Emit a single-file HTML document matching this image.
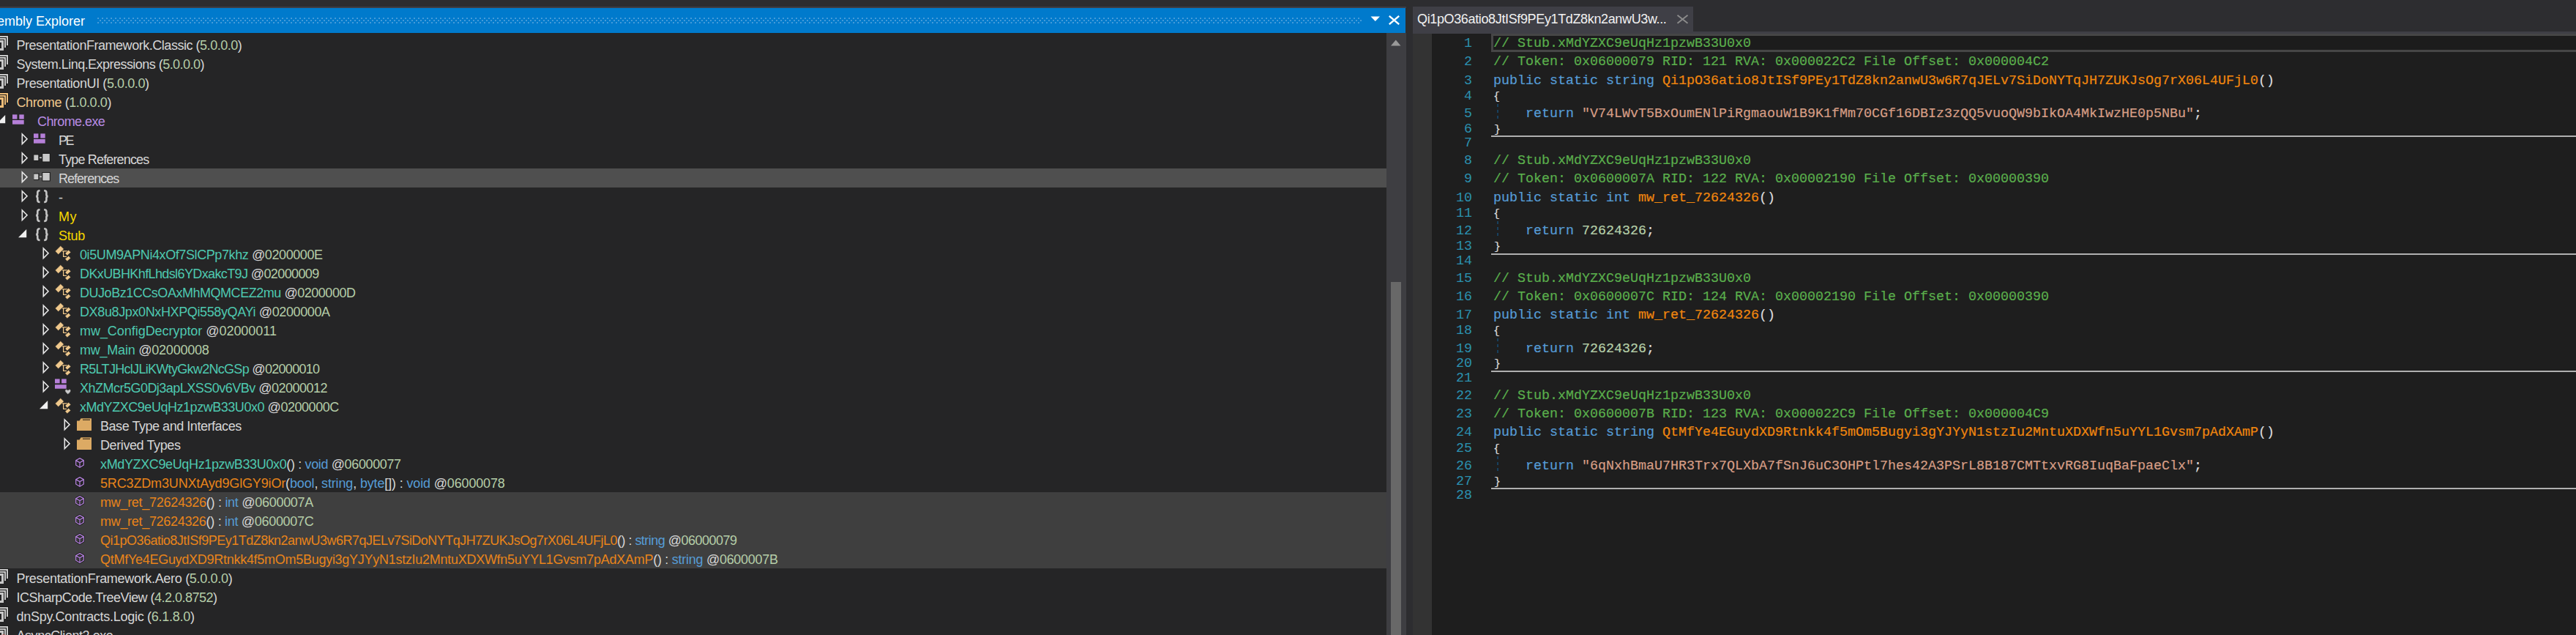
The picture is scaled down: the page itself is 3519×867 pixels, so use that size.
<!DOCTYPE html>
<html><head><meta charset="utf-8"><style>
html,body{margin:0;padding:0}
body{width:3519px;height:867px;overflow:hidden;position:relative;background:#2d2d30;font-family:"Liberation Sans",sans-serif}
.abs{position:absolute}
.tr{position:absolute;height:26px;line-height:26px;font-size:18px;white-space:pre;color:#d6d6d6}
.cl{position:absolute;left:2040px;font-family:"Liberation Mono",monospace;font-size:18.33px;white-space:pre;line-height:0;color:#dcdcdc;-webkit-text-stroke:0.2px currentColor}
.ln{position:absolute;left:1967px;width:44px;text-align:right;font-family:"Liberation Mono",monospace;font-size:18.33px;line-height:0;color:#2b91af}
</style></head><body>
<div class="abs" style="left:0;top:9px;width:1921px;height:2px;background:#3f3f46"></div>
<div class="abs" style="left:0;top:11px;width:1920px;height:34px;background:#007acc"></div>
<div class="abs" style="left:-34px;top:12px;height:34px;line-height:34px;font-size:18px;color:#ffffff;white-space:pre;letter-spacing:0px">Assembly Explorer</div>
<svg style="position:absolute;left:133px;top:24px" width="1727" height="9"><defs><pattern id="g" width="6" height="6" patternUnits="userSpaceOnUse"><rect x="0.25" y="0.25" width="1.6" height="1.6" fill="#6aaee0"/><rect x="3.25" y="3.25" width="1.6" height="1.6" fill="#6aaee0"/></pattern></defs><rect width="1727" height="9" fill="url(#g)"/></svg>
<svg class="abs" style="left:1872px;top:22px" width="14" height="8"><path d="M0.5 0.5 H13 L6.8 7 Z" fill="#ffffff"/></svg>
<svg class="abs" style="left:1896px;top:21px" width="18" height="13"><path d="M1.8 0.8 L15.2 12.2 M15.2 0.8 L1.8 12.2" stroke="#ffffff" stroke-width="2.3"/></svg>
<div class="abs" style="left:0;top:45px;width:1894px;height:822px;background:#252526"></div>
<div class="abs" style="left:0;top:230px;width:1894px;height:26px;background:#4f4f4f"></div>
<div class="abs" style="left:0;top:672px;width:1894px;height:104px;background:#3f3f3f"></div>
<svg style="position:absolute;left:0;top:48px" width="14" height="26" viewBox="0 48 14 26">
<path d="M0 50 H10 V62" stroke="#1a1a1a" stroke-width="4" fill="none"/>
<path d="M0 50 H10 V62" stroke="#c8c8c8" stroke-width="2" fill="none"/>
<path d="M0 53 H7 V65" stroke="#1a1a1a" stroke-width="4" fill="none"/>
<path d="M0 53 H7 V65" stroke="#c8c8c8" stroke-width="2" fill="none"/>
<rect x="-8" y="55" width="13" height="14" fill="#1a1a1a"/>
<rect x="-8" y="56.5" width="11.5" height="11" fill="#252526" stroke="#c8c8c8" stroke-width="3"/>
</svg><svg style="position:absolute;left:0;top:74px" width="14" height="26" viewBox="0 74 14 26">
<path d="M0 76 H10 V88" stroke="#1a1a1a" stroke-width="4" fill="none"/>
<path d="M0 76 H10 V88" stroke="#c8c8c8" stroke-width="2" fill="none"/>
<path d="M0 79 H7 V91" stroke="#1a1a1a" stroke-width="4" fill="none"/>
<path d="M0 79 H7 V91" stroke="#c8c8c8" stroke-width="2" fill="none"/>
<rect x="-8" y="81" width="13" height="14" fill="#1a1a1a"/>
<rect x="-8" y="82.5" width="11.5" height="11" fill="#252526" stroke="#c8c8c8" stroke-width="3"/>
</svg><svg style="position:absolute;left:0;top:100px" width="14" height="26" viewBox="0 100 14 26">
<path d="M0 102 H10 V114" stroke="#1a1a1a" stroke-width="4" fill="none"/>
<path d="M0 102 H10 V114" stroke="#c8c8c8" stroke-width="2" fill="none"/>
<path d="M0 105 H7 V117" stroke="#1a1a1a" stroke-width="4" fill="none"/>
<path d="M0 105 H7 V117" stroke="#c8c8c8" stroke-width="2" fill="none"/>
<rect x="-8" y="107" width="13" height="14" fill="#1a1a1a"/>
<rect x="-8" y="108.5" width="11.5" height="11" fill="#252526" stroke="#c8c8c8" stroke-width="3"/>
</svg><svg style="position:absolute;left:0;top:126px" width="14" height="26" viewBox="0 126 14 26">
<path d="M0 128 H10 V140" stroke="#1a1a1a" stroke-width="4" fill="none"/>
<path d="M0 128 H10 V140" stroke="#eebd78" stroke-width="2" fill="none"/>
<path d="M0 131 H7 V143" stroke="#1a1a1a" stroke-width="4" fill="none"/>
<path d="M0 131 H7 V143" stroke="#eebd78" stroke-width="2" fill="none"/>
<rect x="-8" y="133" width="13" height="14" fill="#1a1a1a"/>
<rect x="-8" y="134.5" width="11.5" height="11" fill="#252526" stroke="#eebd78" stroke-width="3"/>
</svg><svg style="position:absolute;left:-4px;top:152px" width="12" height="26"><path d="M0 16.2 L11.2 16.2 L11.2 5 Z" fill="#f0f0f0"/></svg><svg style="position:absolute;left:17.3px;top:152px" width="24" height="26"><rect x="0" y="4.4" width="6.4" height="6.2" fill="#b57fd8"/><rect x="9.3" y="4.4" width="6.4" height="6.2" fill="#b57fd8"/><rect x="0" y="12" width="15.7" height="5.7" fill="#b57fd8"/></svg><svg style="position:absolute;left:29px;top:178px" width="12" height="26"><path d="M1.3 5 L8 11.75 L1.3 18.5 Z" stroke="#e8e8e8" stroke-width="1.6" fill="none" stroke-linejoin="miter"/></svg><svg style="position:absolute;left:46.3px;top:178px" width="24" height="26"><rect x="0" y="4.4" width="6.4" height="6.2" fill="#b57fd8"/><rect x="9.3" y="4.4" width="6.4" height="6.2" fill="#b57fd8"/><rect x="0" y="12" width="15.7" height="5.7" fill="#b57fd8"/></svg><svg style="position:absolute;left:29px;top:204px" width="12" height="26"><path d="M1.3 5 L8 11.75 L1.3 18.5 Z" stroke="#e8e8e8" stroke-width="1.6" fill="none" stroke-linejoin="miter"/></svg><svg style="position:absolute;left:46px;top:204px" width="24" height="26">
<rect x="-0.5" y="6.5" width="8" height="9.5" fill="#1a1a1a"/><rect x="0.3" y="7.5" width="6" height="7.5" fill="#c8c8c8"/>
<rect x="8" y="10.5" width="3" height="1.6" fill="#c8c8c8"/>
<rect x="11.3" y="5" width="11.5" height="12.5" fill="#1a1a1a"/><rect x="12.3" y="6" width="9.5" height="10.5" fill="#c8c8c8"/>
</svg><svg style="position:absolute;left:29px;top:230px" width="12" height="26"><path d="M1.3 5 L8 11.75 L1.3 18.5 Z" stroke="#e8e8e8" stroke-width="1.6" fill="none" stroke-linejoin="miter"/></svg><svg style="position:absolute;left:46px;top:230px" width="24" height="26">
<rect x="-0.5" y="6.5" width="8" height="9.5" fill="#1a1a1a"/><rect x="0.3" y="7.5" width="6" height="7.5" fill="#c8c8c8"/>
<rect x="8" y="10.5" width="3" height="1.6" fill="#c8c8c8"/>
<rect x="11.3" y="5" width="11.5" height="12.5" fill="#1a1a1a"/><rect x="12.3" y="6" width="9.5" height="10.5" fill="#c8c8c8"/>
</svg><svg style="position:absolute;left:29px;top:256px" width="12" height="26"><path d="M1.3 5 L8 11.75 L1.3 18.5 Z" stroke="#e8e8e8" stroke-width="1.6" fill="none" stroke-linejoin="miter"/></svg><svg style="position:absolute;left:46.5px;top:256px" width="24" height="26">
<path d="M7.5 4.3 C5 4.3 4.3 5.3 4.3 7 V9.8 C4.3 11.2 3.6 11.9 2.3 12.1 C3.6 12.3 4.3 13 4.3 14.4 V17.3 C4.3 19 5 20 7.5 20" stroke="#c4c4c4" stroke-width="2.6" fill="none"/>
<path d="M13.2 4.3 C15.7 4.3 16.4 5.3 16.4 7 V9.8 C16.4 11.2 17.1 11.9 18.4 12.1 C17.1 12.3 16.4 13 16.4 14.4 V17.3 C16.4 19 15.7 20 13.2 20" stroke="#c4c4c4" stroke-width="2.6" fill="none"/>
</svg><svg style="position:absolute;left:29px;top:282px" width="12" height="26"><path d="M1.3 5 L8 11.75 L1.3 18.5 Z" stroke="#e8e8e8" stroke-width="1.6" fill="none" stroke-linejoin="miter"/></svg><svg style="position:absolute;left:46.5px;top:282px" width="24" height="26">
<path d="M7.5 4.3 C5 4.3 4.3 5.3 4.3 7 V9.8 C4.3 11.2 3.6 11.9 2.3 12.1 C3.6 12.3 4.3 13 4.3 14.4 V17.3 C4.3 19 5 20 7.5 20" stroke="#c4c4c4" stroke-width="2.6" fill="none"/>
<path d="M13.2 4.3 C15.7 4.3 16.4 5.3 16.4 7 V9.8 C16.4 11.2 17.1 11.9 18.4 12.1 C17.1 12.3 16.4 13 16.4 14.4 V17.3 C16.4 19 15.7 20 13.2 20" stroke="#c4c4c4" stroke-width="2.6" fill="none"/>
</svg><svg style="position:absolute;left:25px;top:308px" width="12" height="26"><path d="M0 16.2 L11.2 16.2 L11.2 5 Z" fill="#f0f0f0"/></svg><svg style="position:absolute;left:46.5px;top:308px" width="24" height="26">
<path d="M7.5 4.3 C5 4.3 4.3 5.3 4.3 7 V9.8 C4.3 11.2 3.6 11.9 2.3 12.1 C3.6 12.3 4.3 13 4.3 14.4 V17.3 C4.3 19 5 20 7.5 20" stroke="#c4c4c4" stroke-width="2.6" fill="none"/>
<path d="M13.2 4.3 C15.7 4.3 16.4 5.3 16.4 7 V9.8 C16.4 11.2 17.1 11.9 18.4 12.1 C17.1 12.3 16.4 13 16.4 14.4 V17.3 C16.4 19 15.7 20 13.2 20" stroke="#c4c4c4" stroke-width="2.6" fill="none"/>
</svg><svg style="position:absolute;left:58px;top:334px" width="12" height="26"><path d="M1.3 5 L8 11.75 L1.3 18.5 Z" stroke="#e8e8e8" stroke-width="1.6" fill="none" stroke-linejoin="miter"/></svg><svg style="position:absolute;left:70px;top:333px" width="30" height="28">
<path d="M14.8 9.9 H22 M16.6 9.9 V17.4 H21" stroke="#1e1e1e" stroke-width="3" fill="none"/>
<path d="M14.8 9.9 H22 M16.6 9.9 V17.4 H21" stroke="#efc88c" stroke-width="1.3" fill="none"/>
<path d="M12.8 2.6 L17.4 7.1 L9.7 14.6 L5.3 10 Z" fill="#efc88c" stroke="#1e1e1e" stroke-width="0.6" stroke-linejoin="round"/>
<path d="M23.6 8.2 L26.9 11.5 L21.8 15.9 L18.8 13 Z" fill="#efc88c" stroke="#1e1e1e" stroke-width="0.6" stroke-linejoin="round"/>
<path d="M23.6 16.3 L26.7 19.4 L21.8 23.7 L18.8 20.6 Z" fill="#efc88c" stroke="#1e1e1e" stroke-width="0.6" stroke-linejoin="round"/>
</svg><svg style="position:absolute;left:58px;top:360px" width="12" height="26"><path d="M1.3 5 L8 11.75 L1.3 18.5 Z" stroke="#e8e8e8" stroke-width="1.6" fill="none" stroke-linejoin="miter"/></svg><svg style="position:absolute;left:70px;top:359px" width="30" height="28">
<path d="M14.8 9.9 H22 M16.6 9.9 V17.4 H21" stroke="#1e1e1e" stroke-width="3" fill="none"/>
<path d="M14.8 9.9 H22 M16.6 9.9 V17.4 H21" stroke="#efc88c" stroke-width="1.3" fill="none"/>
<path d="M12.8 2.6 L17.4 7.1 L9.7 14.6 L5.3 10 Z" fill="#efc88c" stroke="#1e1e1e" stroke-width="0.6" stroke-linejoin="round"/>
<path d="M23.6 8.2 L26.9 11.5 L21.8 15.9 L18.8 13 Z" fill="#efc88c" stroke="#1e1e1e" stroke-width="0.6" stroke-linejoin="round"/>
<path d="M23.6 16.3 L26.7 19.4 L21.8 23.7 L18.8 20.6 Z" fill="#efc88c" stroke="#1e1e1e" stroke-width="0.6" stroke-linejoin="round"/>
</svg><svg style="position:absolute;left:58px;top:386px" width="12" height="26"><path d="M1.3 5 L8 11.75 L1.3 18.5 Z" stroke="#e8e8e8" stroke-width="1.6" fill="none" stroke-linejoin="miter"/></svg><svg style="position:absolute;left:70px;top:385px" width="30" height="28">
<path d="M14.8 9.9 H22 M16.6 9.9 V17.4 H21" stroke="#1e1e1e" stroke-width="3" fill="none"/>
<path d="M14.8 9.9 H22 M16.6 9.9 V17.4 H21" stroke="#efc88c" stroke-width="1.3" fill="none"/>
<path d="M12.8 2.6 L17.4 7.1 L9.7 14.6 L5.3 10 Z" fill="#efc88c" stroke="#1e1e1e" stroke-width="0.6" stroke-linejoin="round"/>
<path d="M23.6 8.2 L26.9 11.5 L21.8 15.9 L18.8 13 Z" fill="#efc88c" stroke="#1e1e1e" stroke-width="0.6" stroke-linejoin="round"/>
<path d="M23.6 16.3 L26.7 19.4 L21.8 23.7 L18.8 20.6 Z" fill="#efc88c" stroke="#1e1e1e" stroke-width="0.6" stroke-linejoin="round"/>
</svg><svg style="position:absolute;left:58px;top:412px" width="12" height="26"><path d="M1.3 5 L8 11.75 L1.3 18.5 Z" stroke="#e8e8e8" stroke-width="1.6" fill="none" stroke-linejoin="miter"/></svg><svg style="position:absolute;left:70px;top:411px" width="30" height="28">
<path d="M14.8 9.9 H22 M16.6 9.9 V17.4 H21" stroke="#1e1e1e" stroke-width="3" fill="none"/>
<path d="M14.8 9.9 H22 M16.6 9.9 V17.4 H21" stroke="#efc88c" stroke-width="1.3" fill="none"/>
<path d="M12.8 2.6 L17.4 7.1 L9.7 14.6 L5.3 10 Z" fill="#efc88c" stroke="#1e1e1e" stroke-width="0.6" stroke-linejoin="round"/>
<path d="M23.6 8.2 L26.9 11.5 L21.8 15.9 L18.8 13 Z" fill="#efc88c" stroke="#1e1e1e" stroke-width="0.6" stroke-linejoin="round"/>
<path d="M23.6 16.3 L26.7 19.4 L21.8 23.7 L18.8 20.6 Z" fill="#efc88c" stroke="#1e1e1e" stroke-width="0.6" stroke-linejoin="round"/>
</svg><svg style="position:absolute;left:58px;top:438px" width="12" height="26"><path d="M1.3 5 L8 11.75 L1.3 18.5 Z" stroke="#e8e8e8" stroke-width="1.6" fill="none" stroke-linejoin="miter"/></svg><svg style="position:absolute;left:70px;top:437px" width="30" height="28">
<path d="M14.8 9.9 H22 M16.6 9.9 V17.4 H21" stroke="#1e1e1e" stroke-width="3" fill="none"/>
<path d="M14.8 9.9 H22 M16.6 9.9 V17.4 H21" stroke="#efc88c" stroke-width="1.3" fill="none"/>
<path d="M12.8 2.6 L17.4 7.1 L9.7 14.6 L5.3 10 Z" fill="#efc88c" stroke="#1e1e1e" stroke-width="0.6" stroke-linejoin="round"/>
<path d="M23.6 8.2 L26.9 11.5 L21.8 15.9 L18.8 13 Z" fill="#efc88c" stroke="#1e1e1e" stroke-width="0.6" stroke-linejoin="round"/>
<path d="M23.6 16.3 L26.7 19.4 L21.8 23.7 L18.8 20.6 Z" fill="#efc88c" stroke="#1e1e1e" stroke-width="0.6" stroke-linejoin="round"/>
</svg><svg style="position:absolute;left:58px;top:464px" width="12" height="26"><path d="M1.3 5 L8 11.75 L1.3 18.5 Z" stroke="#e8e8e8" stroke-width="1.6" fill="none" stroke-linejoin="miter"/></svg><svg style="position:absolute;left:70px;top:463px" width="30" height="28">
<path d="M14.8 9.9 H22 M16.6 9.9 V17.4 H21" stroke="#1e1e1e" stroke-width="3" fill="none"/>
<path d="M14.8 9.9 H22 M16.6 9.9 V17.4 H21" stroke="#efc88c" stroke-width="1.3" fill="none"/>
<path d="M12.8 2.6 L17.4 7.1 L9.7 14.6 L5.3 10 Z" fill="#efc88c" stroke="#1e1e1e" stroke-width="0.6" stroke-linejoin="round"/>
<path d="M23.6 8.2 L26.9 11.5 L21.8 15.9 L18.8 13 Z" fill="#efc88c" stroke="#1e1e1e" stroke-width="0.6" stroke-linejoin="round"/>
<path d="M23.6 16.3 L26.7 19.4 L21.8 23.7 L18.8 20.6 Z" fill="#efc88c" stroke="#1e1e1e" stroke-width="0.6" stroke-linejoin="round"/>
</svg><svg style="position:absolute;left:58px;top:490px" width="12" height="26"><path d="M1.3 5 L8 11.75 L1.3 18.5 Z" stroke="#e8e8e8" stroke-width="1.6" fill="none" stroke-linejoin="miter"/></svg><svg style="position:absolute;left:70px;top:489px" width="30" height="28">
<path d="M14.8 9.9 H22 M16.6 9.9 V17.4 H21" stroke="#1e1e1e" stroke-width="3" fill="none"/>
<path d="M14.8 9.9 H22 M16.6 9.9 V17.4 H21" stroke="#efc88c" stroke-width="1.3" fill="none"/>
<path d="M12.8 2.6 L17.4 7.1 L9.7 14.6 L5.3 10 Z" fill="#efc88c" stroke="#1e1e1e" stroke-width="0.6" stroke-linejoin="round"/>
<path d="M23.6 8.2 L26.9 11.5 L21.8 15.9 L18.8 13 Z" fill="#efc88c" stroke="#1e1e1e" stroke-width="0.6" stroke-linejoin="round"/>
<path d="M23.6 16.3 L26.7 19.4 L21.8 23.7 L18.8 20.6 Z" fill="#efc88c" stroke="#1e1e1e" stroke-width="0.6" stroke-linejoin="round"/>
</svg><svg style="position:absolute;left:58px;top:516px" width="12" height="26"><path d="M1.3 5 L8 11.75 L1.3 18.5 Z" stroke="#e8e8e8" stroke-width="1.6" fill="none" stroke-linejoin="miter"/></svg><svg style="position:absolute;left:75.2px;top:516px" width="24" height="26"><rect x="0" y="1.4" width="6.6" height="5.9" fill="#b57fd8"/><rect x="9.1" y="1.4" width="6.6" height="5.9" fill="#b57fd8"/><rect x="0" y="9.2" width="15.7" height="5.5" fill="#b57fd8"/><path d="M17.8 17 C16 14.6 13.4 15.6 13.8 18 C14 19.3 15.5 20.6 17.8 22.4 C20.1 20.6 21.6 19.3 21.8 18 C22.2 15.6 19.6 14.6 17.8 17 Z" fill="#c8c8c8" stroke="#1e1e1e" stroke-width="0.8"/></svg><svg style="position:absolute;left:54px;top:542px" width="12" height="26"><path d="M0 16.2 L11.2 16.2 L11.2 5 Z" fill="#f0f0f0"/></svg><svg style="position:absolute;left:70px;top:541px" width="30" height="28">
<path d="M14.8 9.9 H22 M16.6 9.9 V17.4 H21" stroke="#1e1e1e" stroke-width="3" fill="none"/>
<path d="M14.8 9.9 H22 M16.6 9.9 V17.4 H21" stroke="#efc88c" stroke-width="1.3" fill="none"/>
<path d="M12.8 2.6 L17.4 7.1 L9.7 14.6 L5.3 10 Z" fill="#efc88c" stroke="#1e1e1e" stroke-width="0.6" stroke-linejoin="round"/>
<path d="M23.6 8.2 L26.9 11.5 L21.8 15.9 L18.8 13 Z" fill="#efc88c" stroke="#1e1e1e" stroke-width="0.6" stroke-linejoin="round"/>
<path d="M23.6 16.3 L26.7 19.4 L21.8 23.7 L18.8 20.6 Z" fill="#efc88c" stroke="#1e1e1e" stroke-width="0.6" stroke-linejoin="round"/>
</svg><svg style="position:absolute;left:86.5px;top:568px" width="12" height="26"><path d="M1.3 5 L8 11.75 L1.3 18.5 Z" stroke="#e8e8e8" stroke-width="1.6" fill="none" stroke-linejoin="miter"/></svg><svg style="position:absolute;left:105px;top:568px" width="24" height="26">
<path d="M0 6.5 L0 19.5 Q0 20 0.5 20 L19.5 20 Q20 20 20 19.5 L20 3.8 Q20 3.2 19.5 3.2 L5.5 3.2 L3.5 6.5 Z" fill="#dcaa64"/>
<path d="M8 5.2 H18" stroke="#3a2e1e" stroke-width="1.2"/>
</svg><svg style="position:absolute;left:86.5px;top:594px" width="12" height="26"><path d="M1.3 5 L8 11.75 L1.3 18.5 Z" stroke="#e8e8e8" stroke-width="1.6" fill="none" stroke-linejoin="miter"/></svg><svg style="position:absolute;left:105px;top:594px" width="24" height="26">
<path d="M0 6.5 L0 19.5 Q0 20 0.5 20 L19.5 20 Q20 20 20 19.5 L20 3.8 Q20 3.2 19.5 3.2 L5.5 3.2 L3.5 6.5 Z" fill="#dcaa64"/>
<path d="M8 5.2 H18" stroke="#3a2e1e" stroke-width="1.2"/>
</svg><svg style="position:absolute;left:103.2px;top:620px" width="16" height="26">
<path d="M6 5.6 L11.3 8.6 V15 L6 18.2 L0.7 15 V8.6 Z M0.7 8.6 L6 11.6 L11.3 8.6 M6 11.6 V18.2" stroke="#1e1e1e" stroke-width="3" fill="none" stroke-linejoin="round"/>
<path d="M6 5.6 L11.3 8.6 V15 L6 18.2 L0.7 15 V8.6 Z M0.7 8.6 L6 11.6 L11.3 8.6 M6 11.6 V18.2" stroke="#b07fd8" stroke-width="1.3" fill="none" stroke-linejoin="round"/>
</svg><svg style="position:absolute;left:103.2px;top:646px" width="16" height="26">
<path d="M6 5.6 L11.3 8.6 V15 L6 18.2 L0.7 15 V8.6 Z M0.7 8.6 L6 11.6 L11.3 8.6 M6 11.6 V18.2" stroke="#1e1e1e" stroke-width="3" fill="none" stroke-linejoin="round"/>
<path d="M6 5.6 L11.3 8.6 V15 L6 18.2 L0.7 15 V8.6 Z M0.7 8.6 L6 11.6 L11.3 8.6 M6 11.6 V18.2" stroke="#b07fd8" stroke-width="1.3" fill="none" stroke-linejoin="round"/>
</svg><svg style="position:absolute;left:103.2px;top:672px" width="16" height="26">
<path d="M6 5.6 L11.3 8.6 V15 L6 18.2 L0.7 15 V8.6 Z M0.7 8.6 L6 11.6 L11.3 8.6 M6 11.6 V18.2" stroke="#1e1e1e" stroke-width="3" fill="none" stroke-linejoin="round"/>
<path d="M6 5.6 L11.3 8.6 V15 L6 18.2 L0.7 15 V8.6 Z M0.7 8.6 L6 11.6 L11.3 8.6 M6 11.6 V18.2" stroke="#b07fd8" stroke-width="1.3" fill="none" stroke-linejoin="round"/>
</svg><svg style="position:absolute;left:103.2px;top:698px" width="16" height="26">
<path d="M6 5.6 L11.3 8.6 V15 L6 18.2 L0.7 15 V8.6 Z M0.7 8.6 L6 11.6 L11.3 8.6 M6 11.6 V18.2" stroke="#1e1e1e" stroke-width="3" fill="none" stroke-linejoin="round"/>
<path d="M6 5.6 L11.3 8.6 V15 L6 18.2 L0.7 15 V8.6 Z M0.7 8.6 L6 11.6 L11.3 8.6 M6 11.6 V18.2" stroke="#b07fd8" stroke-width="1.3" fill="none" stroke-linejoin="round"/>
</svg><svg style="position:absolute;left:103.2px;top:724px" width="16" height="26">
<path d="M6 5.6 L11.3 8.6 V15 L6 18.2 L0.7 15 V8.6 Z M0.7 8.6 L6 11.6 L11.3 8.6 M6 11.6 V18.2" stroke="#1e1e1e" stroke-width="3" fill="none" stroke-linejoin="round"/>
<path d="M6 5.6 L11.3 8.6 V15 L6 18.2 L0.7 15 V8.6 Z M0.7 8.6 L6 11.6 L11.3 8.6 M6 11.6 V18.2" stroke="#b07fd8" stroke-width="1.3" fill="none" stroke-linejoin="round"/>
</svg><svg style="position:absolute;left:103.2px;top:750px" width="16" height="26">
<path d="M6 5.6 L11.3 8.6 V15 L6 18.2 L0.7 15 V8.6 Z M0.7 8.6 L6 11.6 L11.3 8.6 M6 11.6 V18.2" stroke="#1e1e1e" stroke-width="3" fill="none" stroke-linejoin="round"/>
<path d="M6 5.6 L11.3 8.6 V15 L6 18.2 L0.7 15 V8.6 Z M0.7 8.6 L6 11.6 L11.3 8.6 M6 11.6 V18.2" stroke="#b07fd8" stroke-width="1.3" fill="none" stroke-linejoin="round"/>
</svg><svg style="position:absolute;left:0;top:776px" width="14" height="26" viewBox="0 776 14 26">
<path d="M0 778 H10 V790" stroke="#1a1a1a" stroke-width="4" fill="none"/>
<path d="M0 778 H10 V790" stroke="#c8c8c8" stroke-width="2" fill="none"/>
<path d="M0 781 H7 V793" stroke="#1a1a1a" stroke-width="4" fill="none"/>
<path d="M0 781 H7 V793" stroke="#c8c8c8" stroke-width="2" fill="none"/>
<rect x="-8" y="783" width="13" height="14" fill="#1a1a1a"/>
<rect x="-8" y="784.5" width="11.5" height="11" fill="#252526" stroke="#c8c8c8" stroke-width="3"/>
</svg><svg style="position:absolute;left:0;top:802px" width="14" height="26" viewBox="0 802 14 26">
<path d="M0 804 H10 V816" stroke="#1a1a1a" stroke-width="4" fill="none"/>
<path d="M0 804 H10 V816" stroke="#c8c8c8" stroke-width="2" fill="none"/>
<path d="M0 807 H7 V819" stroke="#1a1a1a" stroke-width="4" fill="none"/>
<path d="M0 807 H7 V819" stroke="#c8c8c8" stroke-width="2" fill="none"/>
<rect x="-8" y="809" width="13" height="14" fill="#1a1a1a"/>
<rect x="-8" y="810.5" width="11.5" height="11" fill="#252526" stroke="#c8c8c8" stroke-width="3"/>
</svg><svg style="position:absolute;left:0;top:828px" width="14" height="26" viewBox="0 828 14 26">
<path d="M0 830 H10 V842" stroke="#1a1a1a" stroke-width="4" fill="none"/>
<path d="M0 830 H10 V842" stroke="#c8c8c8" stroke-width="2" fill="none"/>
<path d="M0 833 H7 V845" stroke="#1a1a1a" stroke-width="4" fill="none"/>
<path d="M0 833 H7 V845" stroke="#c8c8c8" stroke-width="2" fill="none"/>
<rect x="-8" y="835" width="13" height="14" fill="#1a1a1a"/>
<rect x="-8" y="836.5" width="11.5" height="11" fill="#252526" stroke="#c8c8c8" stroke-width="3"/>
</svg><svg style="position:absolute;left:0;top:854px" width="14" height="26" viewBox="0 854 14 26">
<path d="M0 856 H10 V868" stroke="#1a1a1a" stroke-width="4" fill="none"/>
<path d="M0 856 H10 V868" stroke="#c8c8c8" stroke-width="2" fill="none"/>
<path d="M0 859 H7 V871" stroke="#1a1a1a" stroke-width="4" fill="none"/>
<path d="M0 859 H7 V871" stroke="#c8c8c8" stroke-width="2" fill="none"/>
<rect x="-8" y="861" width="13" height="14" fill="#1a1a1a"/>
<rect x="-8" y="862.5" width="11.5" height="11" fill="#252526" stroke="#c8c8c8" stroke-width="3"/>
<circle cx="5" cy="870.5" r="4" fill="#e51400"/></svg>
<div class="tr" style="top:49px;left:22.5px;letter-spacing:-0.468px"><span style="color:#d6d6d6">PresentationFramework.Classic </span><span style="color:#d6d6d6">(</span><span style="color:#b5cea8">5.0.0.0</span><span style="color:#d6d6d6">)</span></div><div class="tr" style="top:75px;left:22.5px;letter-spacing:-0.538px"><span style="color:#d6d6d6">System.Linq.Expressions </span><span style="color:#d6d6d6">(</span><span style="color:#b5cea8">5.0.0.0</span><span style="color:#d6d6d6">)</span></div><div class="tr" style="top:101px;left:22.5px;letter-spacing:-0.417px"><span style="color:#d6d6d6">PresentationUI </span><span style="color:#d6d6d6">(</span><span style="color:#b5cea8">5.0.0.0</span><span style="color:#d6d6d6">)</span></div><div class="tr" style="top:127px;left:22.5px;letter-spacing:-0.413px"><span style="color:#f0c88c">Chrome </span><span style="color:#d6d6d6">(</span><span style="color:#b5cea8">1.0.0.0</span><span style="color:#d6d6d6">)</span></div><div class="tr" style="top:153px;left:51px;letter-spacing:-0.578px"><span style="color:#b88ce4">Chrome.exe</span></div><div class="tr" style="top:179px;left:80px;letter-spacing:-2.500px"><span style="color:#d6d6d6">PE</span></div><div class="tr" style="top:205px;left:80px;letter-spacing:-0.843px"><span style="color:#d6d6d6">Type References</span></div><div class="tr" style="top:231px;left:80px;letter-spacing:-0.978px"><span style="color:#d6d6d6">References</span></div><div class="tr" style="top:257px;left:80px;letter-spacing:0.000px"><span style="color:#d6d6d6">-</span></div><div class="tr" style="top:283px;left:80px;letter-spacing:0.500px"><span style="color:#f5d800">My</span></div><div class="tr" style="top:309px;left:80px;letter-spacing:-0.267px"><span style="color:#f5d800">Stub</span></div><div class="tr" style="top:335px;left:109px;letter-spacing:-0.406px"><span style="color:#4ec9b0">0i5UM9APNi4xOf7SlCPp7khz </span><span style="color:#d6d6d6">@</span><span style="color:#b5cea8">0200000E</span></div><div class="tr" style="top:361px;left:109px;letter-spacing:-0.612px"><span style="color:#4ec9b0">DKxUBHKhfLhdsl6YDxakcT9J </span><span style="color:#d6d6d6">@</span><span style="color:#b5cea8">02000009</span></div><div class="tr" style="top:387px;left:109px;letter-spacing:-0.467px"><span style="color:#4ec9b0">DUJoBz1CCsOAxMhMQMCEZ2mu </span><span style="color:#d6d6d6">@</span><span style="color:#b5cea8">0200000D</span></div><div class="tr" style="top:413px;left:109px;letter-spacing:-0.376px"><span style="color:#4ec9b0">DX8u8Jpx0NxHXPQi558yQAYi </span><span style="color:#d6d6d6">@</span><span style="color:#b5cea8">0200000A</span></div><div class="tr" style="top:439px;left:109px;letter-spacing:-0.044px"><span style="color:#4ec9b0">mw_ConfigDecryptor </span><span style="color:#d6d6d6">@</span><span style="color:#b5cea8">02000011</span></div><div class="tr" style="top:465px;left:109px;letter-spacing:-0.225px"><span style="color:#4ec9b0">mw_Main </span><span style="color:#d6d6d6">@</span><span style="color:#b5cea8">02000008</span></div><div class="tr" style="top:491px;left:109px;letter-spacing:-0.697px"><span style="color:#4ec9b0">R5LTJHclJLiKWtyGkw2NcGSp </span><span style="color:#d6d6d6">@</span><span style="color:#b5cea8">02000010</span></div><div class="tr" style="top:517px;left:109px;letter-spacing:-0.515px"><span style="color:#4ec9b0">XhZMcr5G0Dj3apLXSS0v6VBv </span><span style="color:#d6d6d6">@</span><span style="color:#b5cea8">02000012</span></div><div class="tr" style="top:543px;left:109px;letter-spacing:-0.461px"><span style="color:#4ec9b0">xMdYZXC9eUqHz1pzwB33U0x0 </span><span style="color:#d6d6d6">@</span><span style="color:#b5cea8">0200000C</span></div><div class="tr" style="top:569px;left:137px;letter-spacing:-0.461px"><span style="color:#d6d6d6">Base Type and Interfaces</span></div><div class="tr" style="top:595px;left:137px;letter-spacing:-0.400px"><span style="color:#d6d6d6">Derived Types</span></div><div class="tr" style="top:621px;left:137px;letter-spacing:-0.367px"><span style="color:#4ec9b0">xMdYZXC9eUqHz1pzwB33U0x0</span><span style="color:#d6d6d6">(</span><span style="color:#d6d6d6">)</span><span style="color:#d6d6d6"> : </span><span style="color:#569cd6">void</span><span style="color:#d6d6d6"> </span><span style="color:#d6d6d6">@</span><span style="color:#b5cea8">06000077</span></div><div class="tr" style="top:647px;left:137px;letter-spacing:-0.152px"><span style="color:#e8841a">5RC3ZDm3UNXtAyd9GlGY9iOr</span><span style="color:#d6d6d6">(</span><span style="color:#569cd6">bool</span><span style="color:#d6d6d6">, </span><span style="color:#569cd6">string</span><span style="color:#d6d6d6">, </span><span style="color:#569cd6">byte</span><span style="color:#d6d6d6">[]</span><span style="color:#d6d6d6">)</span><span style="color:#d6d6d6"> : </span><span style="color:#569cd6">void</span><span style="color:#d6d6d6"> </span><span style="color:#d6d6d6">@</span><span style="color:#b5cea8">06000078</span></div><div class="tr" style="top:673px;left:137px;letter-spacing:-0.288px"><span style="color:#e8841a">mw_ret_72624326</span><span style="color:#d6d6d6">(</span><span style="color:#d6d6d6">)</span><span style="color:#d6d6d6"> : </span><span style="color:#569cd6">int</span><span style="color:#d6d6d6"> </span><span style="color:#d6d6d6">@</span><span style="color:#b5cea8">0600007A</span></div><div class="tr" style="top:699px;left:137px;letter-spacing:-0.306px"><span style="color:#e8841a">mw_ret_72624326</span><span style="color:#d6d6d6">(</span><span style="color:#d6d6d6">)</span><span style="color:#d6d6d6"> : </span><span style="color:#569cd6">int</span><span style="color:#d6d6d6"> </span><span style="color:#d6d6d6">@</span><span style="color:#b5cea8">0600007C</span></div><div class="tr" style="top:725px;left:137px;letter-spacing:-0.519px"><span style="color:#e8841a">Qi1pO36atio8JtISf9PEy1TdZ8kn2anwU3w6R7qJELv7SiDoNYTqJH7ZUKJsOg7rX06L4UFjL0</span><span style="color:#d6d6d6">(</span><span style="color:#d6d6d6">)</span><span style="color:#d6d6d6"> : </span><span style="color:#569cd6">string</span><span style="color:#d6d6d6"> </span><span style="color:#d6d6d6">@</span><span style="color:#b5cea8">06000079</span></div><div class="tr" style="top:751px;left:137px;letter-spacing:-0.277px"><span style="color:#e8841a">QtMfYe4EGuydXD9Rtnkk4f5mOm5Bugyi3gYJYyN1stzIu2MntuXDXWfn5uYYL1Gvsm7pAdXAmP</span><span style="color:#d6d6d6">(</span><span style="color:#d6d6d6">)</span><span style="color:#d6d6d6"> : </span><span style="color:#569cd6">string</span><span style="color:#d6d6d6"> </span><span style="color:#d6d6d6">@</span><span style="color:#b5cea8">0600007B</span></div><div class="tr" style="top:777px;left:22.5px;letter-spacing:-0.314px"><span style="color:#d6d6d6">PresentationFramework.Aero </span><span style="color:#d6d6d6">(</span><span style="color:#b5cea8">5.0.0.0</span><span style="color:#d6d6d6">)</span></div><div class="tr" style="top:803px;left:22.5px;letter-spacing:-0.525px"><span style="color:#d6d6d6">ICSharpCode.TreeView </span><span style="color:#d6d6d6">(</span><span style="color:#b5cea8">4.2.0.8752</span><span style="color:#d6d6d6">)</span></div><div class="tr" style="top:829px;left:22.5px;letter-spacing:-0.280px"><span style="color:#d6d6d6">dnSpy.Contracts.Logic </span><span style="color:#d6d6d6">(</span><span style="color:#b5cea8">6.1.8.0</span><span style="color:#d6d6d6">)</span></div><div class="tr" style="top:855px;left:22.5px;letter-spacing:-0.450px"><span style="color:#d6d6d6">AsyncClient2.exe</span></div>
<div class="abs" style="left:1894px;top:45px;width:27px;height:822px;background:#3e3e42"></div>
<svg class="abs" style="left:1900px;top:54px" width="14" height="9"><path d="M0 8.5 L6.8 0.5 L13.5 8.5 Z" fill="#999999"/></svg>
<div class="abs" style="left:1900px;top:385px;width:14px;height:482px;background:#686868"></div>
<div class="abs" style="left:1930px;top:9px;width:383px;height:37px;background:#3f3f46"></div>
<div class="abs" style="left:1936px;top:8px;height:37px;line-height:37px;font-size:18px;color:#f1f1f1;white-space:pre;letter-spacing:-0.36px">Qi1pO36atio8JtISf9PEy1TdZ8kn2anwU3w...</div>
<svg class="abs" style="left:2290px;top:20px" width="17" height="13"><path d="M1.5 0.7 L15.5 11.8 M15.5 0.7 L1.5 11.8" stroke="#8c8c8c" stroke-width="1.8"/></svg>
<div class="abs" style="left:1930px;top:43px;width:1589px;height:3px;background:#3f3f46"></div>
<div class="abs" style="left:1930px;top:46px;width:26px;height:821px;background:#333333"></div>
<div class="abs" style="left:1956px;top:46px;width:1563px;height:821px;background:#1e1e1e"></div>
<div class="abs" style="left:2037px;top:46px;width:1482px;height:25px;box-sizing:border-box;border:3px solid #464646;border-right:none;background:#1c1c1c"></div>
<div style="position:absolute;left:2037px;top:185.0px;width:1482px;height:2px;background:#b0b0b0"></div><div style="position:absolute;left:2037px;top:346.0px;width:1482px;height:2px;background:#b0b0b0"></div><div style="position:absolute;left:2037px;top:506.0px;width:1482px;height:2px;background:#b0b0b0"></div><div style="position:absolute;left:2037px;top:666.0px;width:1482px;height:2px;background:#b0b0b0"></div>
<div style="position:absolute;left:2044.5px;top:141.6px;width:2px;height:21.0px;background:repeating-linear-gradient(to bottom,#17405f 0,#17405f 4.5px,transparent 4.5px,transparent 8px)"></div><div style="position:absolute;left:2044.5px;top:301.9px;width:2px;height:21.0px;background:repeating-linear-gradient(to bottom,#17405f 0,#17405f 4.5px,transparent 4.5px,transparent 8px)"></div><div style="position:absolute;left:2044.5px;top:462.2px;width:2px;height:21.0px;background:repeating-linear-gradient(to bottom,#17405f 0,#17405f 4.5px,transparent 4.5px,transparent 8px)"></div><div style="position:absolute;left:2044.5px;top:622.5px;width:2px;height:21.0px;background:repeating-linear-gradient(to bottom,#17405f 0,#17405f 4.5px,transparent 4.5px,transparent 8px)"></div>
<div class="cl" style="top:59.9px"><span style="color:#5aae4c">// Stub.xMdYZXC9eUqHz1pzwB33U0x0</span></div><div class="ln" style="top:59.9px">1</div><div class="cl" style="top:85.0px"><span style="color:#5aae4c">// Token: 0x06000079 RID: 121 RVA: 0x000022C2 File Offset: 0x000004C2</span></div><div class="ln" style="top:85.0px">2</div><div class="cl" style="top:110.5px"><span style="color:#569cd6">public</span><span style="color:#dcdcdc"> </span><span style="color:#569cd6">static</span><span style="color:#dcdcdc"> </span><span style="color:#569cd6">string</span><span style="color:#dcdcdc"> </span><span style="color:#f0860e">Qi1pO36atio8JtISf9PEy1TdZ8kn2anwU3w6R7qJELv7SiDoNYTqJH7ZUKJsOg7rX06L4UFjL0</span><span style="color:#dcdcdc">()</span></div><div class="ln" style="top:110.5px">3</div><div class="cl" style="top:131.8px"><span style="color:#dcdcdc;font-size:15px">{</span></div><div class="ln" style="top:131.8px">4</div><div class="cl" style="top:155.9px"><span style="color:#dcdcdc">    </span><span style="color:#569cd6">return</span><span style="color:#dcdcdc"> </span><span style="color:#d69d85">&quot;V74LWvT5BxOumENlPiRgmaouW1B9K1fMm70CGf16DBIz3zQQ5vuoQW9bIkOA4MkIwzHE0p5NBu&quot;</span><span style="color:#dcdcdc">;</span></div><div class="ln" style="top:155.9px">5</div><div class="cl" style="top:176.7px"><span style="color:#dcdcdc;font-size:15px;margin-left:1px">}</span></div><div class="ln" style="top:176.7px">6</div><div class="cl" style="top:196.2px"></div><div class="ln" style="top:196.2px">7</div><div class="cl" style="top:220.2px"><span style="color:#5aae4c">// Stub.xMdYZXC9eUqHz1pzwB33U0x0</span></div><div class="ln" style="top:220.2px">8</div><div class="cl" style="top:245.3px"><span style="color:#5aae4c">// Token: 0x0600007A RID: 122 RVA: 0x00002190 File Offset: 0x00000390</span></div><div class="ln" style="top:245.3px">9</div><div class="cl" style="top:270.8px"><span style="color:#569cd6">public</span><span style="color:#dcdcdc"> </span><span style="color:#569cd6">static</span><span style="color:#dcdcdc"> </span><span style="color:#569cd6">int</span><span style="color:#dcdcdc"> </span><span style="color:#f0860e">mw_ret_72624326</span><span style="color:#dcdcdc">()</span></div><div class="ln" style="top:270.8px">10</div><div class="cl" style="top:292.1px"><span style="color:#dcdcdc;font-size:15px">{</span></div><div class="ln" style="top:292.1px">11</div><div class="cl" style="top:316.2px"><span style="color:#dcdcdc">    </span><span style="color:#569cd6">return</span><span style="color:#dcdcdc"> </span><span style="color:#b5cea8">72624326</span><span style="color:#dcdcdc">;</span></div><div class="ln" style="top:316.2px">12</div><div class="cl" style="top:337.0px"><span style="color:#dcdcdc;font-size:15px;margin-left:1px">}</span></div><div class="ln" style="top:337.0px">13</div><div class="cl" style="top:356.5px"></div><div class="ln" style="top:356.5px">14</div><div class="cl" style="top:380.5px"><span style="color:#5aae4c">// Stub.xMdYZXC9eUqHz1pzwB33U0x0</span></div><div class="ln" style="top:380.5px">15</div><div class="cl" style="top:405.6px"><span style="color:#5aae4c">// Token: 0x0600007C RID: 124 RVA: 0x00002190 File Offset: 0x00000390</span></div><div class="ln" style="top:405.6px">16</div><div class="cl" style="top:431.1px"><span style="color:#569cd6">public</span><span style="color:#dcdcdc"> </span><span style="color:#569cd6">static</span><span style="color:#dcdcdc"> </span><span style="color:#569cd6">int</span><span style="color:#dcdcdc"> </span><span style="color:#f0860e">mw_ret_72624326</span><span style="color:#dcdcdc">()</span></div><div class="ln" style="top:431.1px">17</div><div class="cl" style="top:452.4px"><span style="color:#dcdcdc;font-size:15px">{</span></div><div class="ln" style="top:452.4px">18</div><div class="cl" style="top:476.5px"><span style="color:#dcdcdc">    </span><span style="color:#569cd6">return</span><span style="color:#dcdcdc"> </span><span style="color:#b5cea8">72624326</span><span style="color:#dcdcdc">;</span></div><div class="ln" style="top:476.5px">19</div><div class="cl" style="top:497.3px"><span style="color:#dcdcdc;font-size:15px;margin-left:1px">}</span></div><div class="ln" style="top:497.3px">20</div><div class="cl" style="top:516.8px"></div><div class="ln" style="top:516.8px">21</div><div class="cl" style="top:540.8px"><span style="color:#5aae4c">// Stub.xMdYZXC9eUqHz1pzwB33U0x0</span></div><div class="ln" style="top:540.8px">22</div><div class="cl" style="top:565.9px"><span style="color:#5aae4c">// Token: 0x0600007B RID: 123 RVA: 0x000022C9 File Offset: 0x000004C9</span></div><div class="ln" style="top:565.9px">23</div><div class="cl" style="top:591.4px"><span style="color:#569cd6">public</span><span style="color:#dcdcdc"> </span><span style="color:#569cd6">static</span><span style="color:#dcdcdc"> </span><span style="color:#569cd6">string</span><span style="color:#dcdcdc"> </span><span style="color:#f0860e">QtMfYe4EGuydXD9Rtnkk4f5mOm5Bugyi3gYJYyN1stzIu2MntuXDXWfn5uYYL1Gvsm7pAdXAmP</span><span style="color:#dcdcdc">()</span></div><div class="ln" style="top:591.4px">24</div><div class="cl" style="top:612.7px"><span style="color:#dcdcdc;font-size:15px">{</span></div><div class="ln" style="top:612.7px">25</div><div class="cl" style="top:636.8px"><span style="color:#dcdcdc">    </span><span style="color:#569cd6">return</span><span style="color:#dcdcdc"> </span><span style="color:#d69d85">&quot;6qNxhBmaU7HR3Trx7QLXbA7fSnJ6uC3OHPtl7hes42A3PSrL8B187CMTtxvRG8IuqBaFpaeClx&quot;</span><span style="color:#dcdcdc">;</span></div><div class="ln" style="top:636.8px">26</div><div class="cl" style="top:657.6px"><span style="color:#dcdcdc;font-size:15px;margin-left:1px">}</span></div><div class="ln" style="top:657.6px">27</div><div class="cl" style="top:677.1px"></div><div class="ln" style="top:677.1px">28</div>
</body></html>
